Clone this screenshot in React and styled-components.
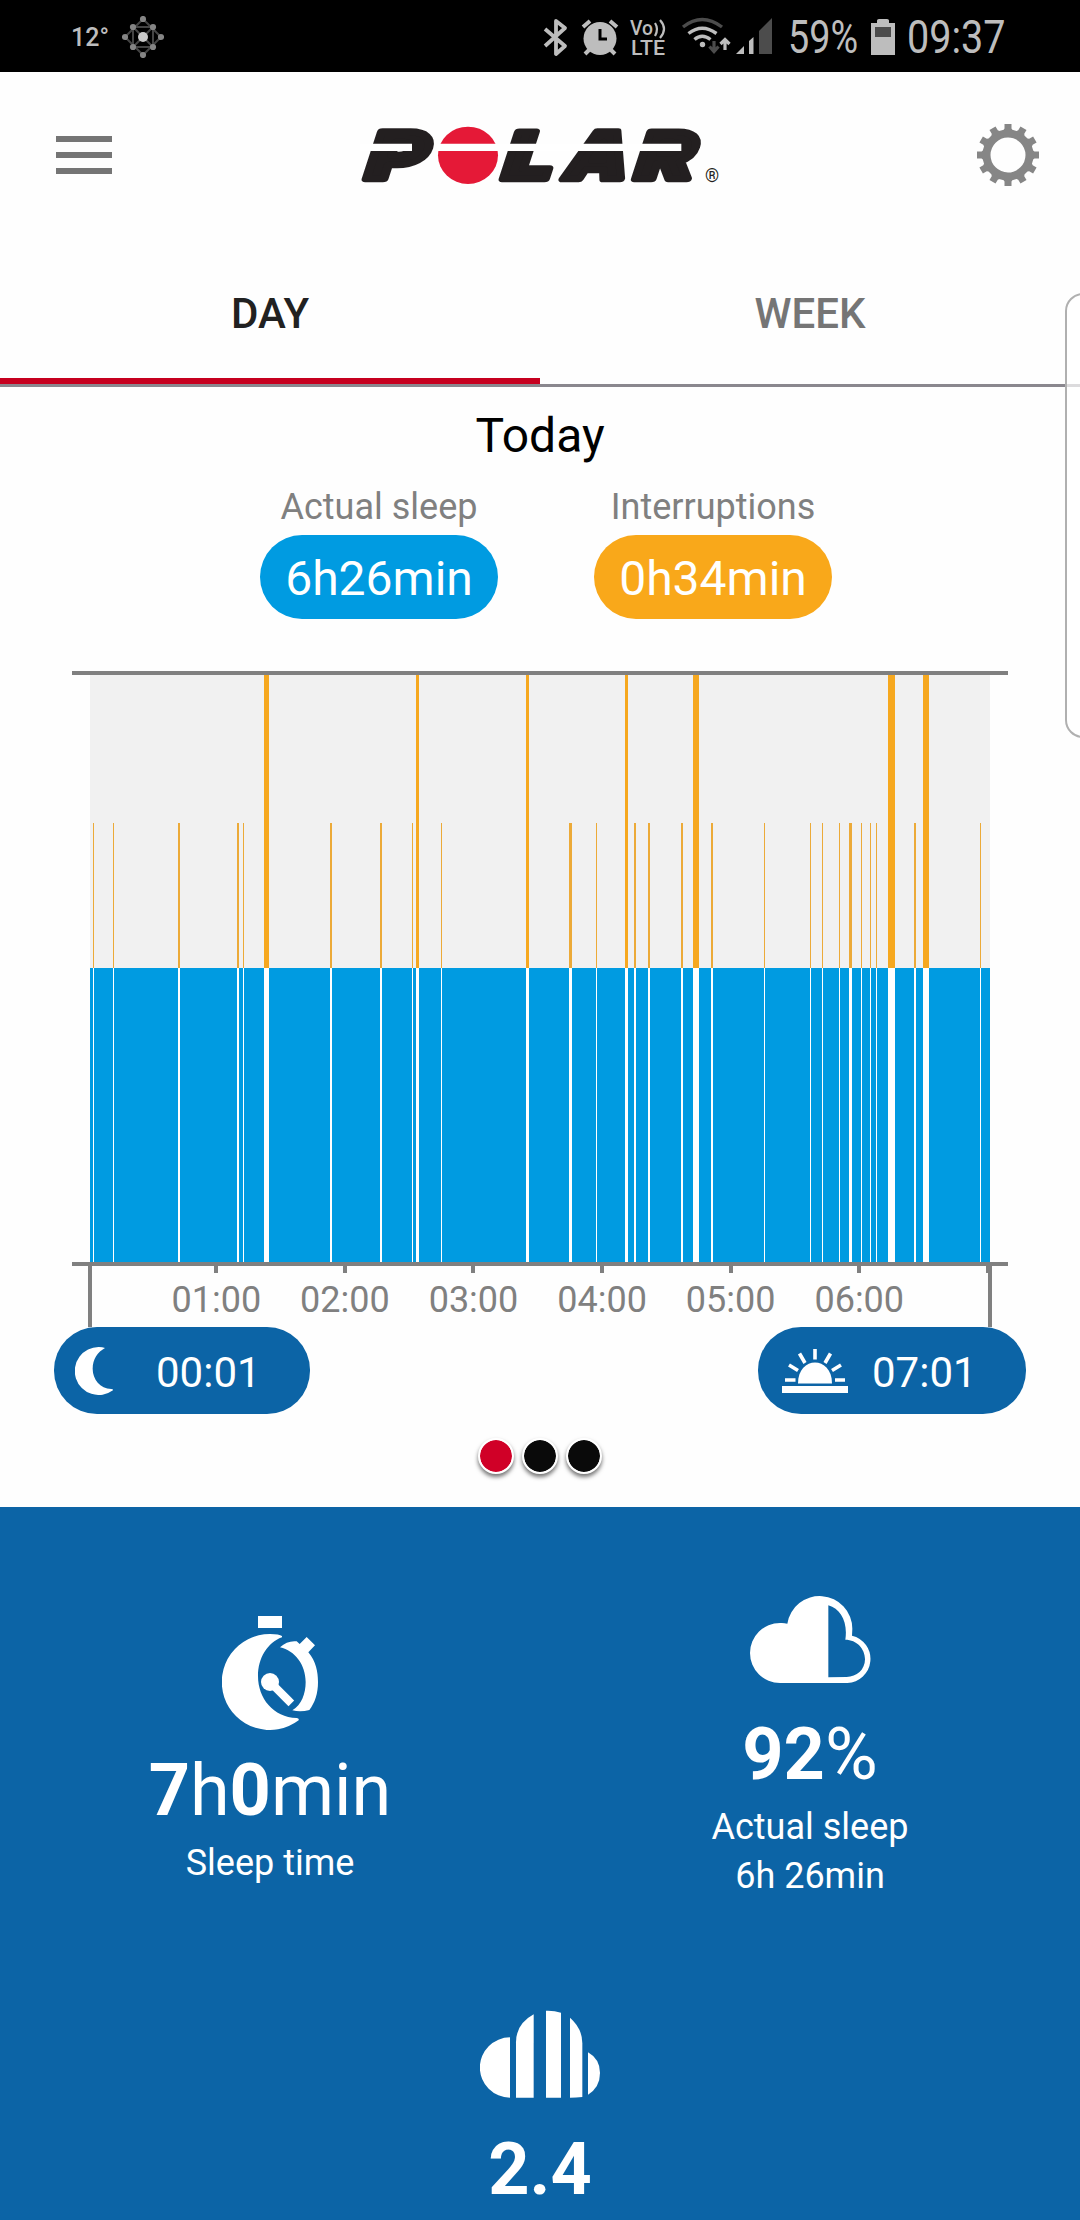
import React from 'react';
import styled, { createGlobalStyle } from 'styled-components';

const GlobalStyle = createGlobalStyle`
  * {
    box-sizing: border-box;
  }

  body {
    margin: 0;
    background: #fefefe;
  }

  svg {
    display: block;
    flex-shrink: 0;
  }
`;

const Page = styled.div`
  position: relative;
  display: flex;
  flex-direction: column;
  width: 1080px;
  height: 2220px;
  overflow: hidden;
  background: #fefefe;
  font-family: Roboto, sans-serif;
`;

const StatusBar = styled.div`
  display: flex;
  justify-content: space-between;
  height: 72px;
  padding: 0 74px 0 70px;
  background: #000;
  color: #bdbdbd;
`;

const StatusGroup = styled.div`
  display: flex;
  align-items: center;
  padding-top: 2px;
`;

const Temperature = styled.span`
  width: 52px;
  padding-left: 1px;
  font-size: 25px;
  font-weight: 500;
`;

const StatusText = styled.span`
  width: ${props => props.width};
  margin-left: ${props => props.gap};
  font-size: 46px;
  line-height: 50px;
  white-space: nowrap;

  span {
    display: inline-block;
    transform: scaleX(${props => props.squeeze});
    transform-origin: left;
  }
`;

const Header = styled.header`
  display: flex;
  align-items: center;
  justify-content: space-between;
  height: 166px;
  padding: 0 40px 0 56px;
`;

const MenuButton = styled.div`
  display: flex;
  flex-direction: column;
  gap: 10px;
  width: 56px;
`;

const MenuLine = styled.span`
  height: 6px;
  background: #757575;
`;

const LogoLink = styled.div`
  margin-right: 8px;
`;

const Tabs = styled.nav`
  display: flex;
  height: 149px;
  border-bottom: 3px solid #8a878e;
`;

const Tab = styled.div`
  display: flex;
  flex: 1;
  align-items: center;
  justify-content: center;
  padding-top: 10px;
  border-bottom: 6px solid ${props => (props.$active ? '#c6001f' : 'transparent')};
  color: ${props => (props.$active ? '#212121' : '#757575')};
  font-size: 42px;
  font-weight: 500;
`;

const DayTitle = styled.h1`
  margin: 21px 0 22px;
  color: #000;
  font-size: 48px;
  font-weight: 400;
  line-height: 56px;
  text-align: center;
`;

const Summary = styled.div`
  display: flex;
  gap: 96px;
  padding-left: 260px;
`;

const SummaryItem = styled.div`
  width: 238px;
`;

const SummaryLabel = styled.div`
  margin-bottom: 7px;
  color: #808080;
  font-size: 36px;
  line-height: 42px;
  text-align: center;
  white-space: nowrap;
`;

const SummaryValue = styled.div`
  height: 84px;
  padding-top: 2px;
  border-radius: 42px;
  background: ${props => props.color};
  color: #fff;
  font-size: 48px;
  line-height: 84px;
  text-align: center;
`;

const ChartWrap = styled.div`
  margin: 52px 72px 0;
`;

const Axis = styled.div`
  display: flex;
  height: 61px;
  margin: 0 88px;
  padding-left: 60px;
  border: solid #808080;
  border-width: 0 4px;
`;

const AxisCell = styled.div`
  display: flex;
  flex-direction: column;
  align-items: center;
  width: 128.6px;
  color: #808080;
  font-size: 36px;
  line-height: 42px;

  &::before {
    content: '';
    width: 4px;
    height: 7px;
    margin-bottom: 6px;
    background: #808080;
  }

  &:last-child {
    flex: 1;
    align-items: flex-end;
  }

  &:last-child::before {
    width: 2px;
  }
`;

const Times = styled.div`
  display: flex;
  justify-content: space-between;
  padding: 0 54px;
`;

const TimePill = styled.div`
  display: flex;
  align-items: center;
  gap: ${props => props.gap};
  width: ${props => props.width};
  height: 87px;
  padding-left: ${props => props.inset};
  border-radius: 43px;
  background: #0c64a6;
  color: #fff;
  font-size: 42px;

  span {
    padding-top: 3px;
  }
`;

const Dots = styled.div`
  display: flex;
  justify-content: center;
  gap: 8px;
  margin-top: 24px;
`;

const Dot = styled.span`
  width: 36px;
  height: 36px;
  border: 2px solid #fff;
  border-radius: 50%;
  background: ${props => (props.$active ? '#d00027' : '#0a0a0a')};
  background-clip: padding-box;
  box-shadow: 0 3px 4px rgba(0, 0, 0, 0.55);
`;

const Stats = styled.section`
  display: grid;
  grid-template-columns: 1fr 1fr;
  grid-template-rows: 414px auto;
  flex: 1;
  margin-top: 33px;
  padding-top: 89px;
  background: #0c64a6;
  color: #fff;
`;

const Stat = styled.div`
  display: flex;
  flex-direction: column;
  align-items: center;
  padding-top: ${props => props.offset || '0'};
  grid-column: ${props => (props.$wide ? '1 / -1' : 'auto')};
`;

const StatValue = styled.div`
  margin: ${props => props.gap} 0 6px;
  font-size: 72px;
  line-height: 84px;
  white-space: nowrap;
`;

const StatLabel = styled.div`
  font-size: 36px;
  line-height: 49px;
`;

const EdgePanel = styled.div`
  position: absolute;
  top: 293px;
  left: 1065px;
  width: 40px;
  height: 445px;
  border: 2px solid #b0b0b0;
  border-radius: 18px;
  background: rgba(255, 255, 255, 0.7);
`;

const CHART_LEFT = 72;

// [x, width] of each interruption
const longInterruptions = [
  [264, 5], [416, 3], [526, 3], [625, 3], [693, 6], [888, 7], [923, 6],
];

const shortInterruptions = [
  [93, 1], [113, 1], [178, 2], [237, 2], [243, 1], [330, 2], [380, 2],
  [412, 1], [441, 1], [569, 3], [596, 1], [634, 2], [648, 2], [681, 2],
  [711, 2], [764, 1], [810, 1], [822, 1], [839, 1], [849, 3], [861, 1],
  [870, 1], [876, 1], [914, 2], [980, 1],
];

const hours = ['01:00', '02:00', '03:00', '04:00', '05:00', '06:00', ''];

const SleepChart = () => (
  <svg width="936" height="595" viewBox="0 0 936 595" shapeRendering="crispEdges">
    <rect x="18" y="4" width="900" height="293" fill="#f1f1f1" />
    <rect x="18" y="297" width="900" height="294" fill="#009be1" />
    {longInterruptions.map(([x, width]) => (
      <rect key={x} x={x - CHART_LEFT} y="4" width={width} height="293" fill="#f6a81f" />
    ))}
    {shortInterruptions.map(([x, width]) => (
      <rect key={x} x={x - CHART_LEFT} y="152" width={width} height="145" fill="#ecaa38" />
    ))}
    {[...longInterruptions, ...shortInterruptions].map(([x, width]) => (
      <rect key={x} x={x - CHART_LEFT} y="297" width={width} height="294" fill="#fff" />
    ))}
    <rect width="936" height="4" fill="#808080" />
    <rect y="591" width="936" height="4" fill="#808080" />
  </svg>
);

const nodes = [
  [21, 3], [21, 39], [3, 21], [39, 21], [11, 11], [31, 11], [11, 31], [31, 31],
];

const NetworkIcon = () => (
  <svg width="42" height="42" viewBox="0 0 42 42">
    <path
      d="M21 3L39 21L21 39L3 21ZM11 11H31V31H11ZM11 11L31 31M31 11L11 31"
      fill="none"
      stroke="#444"
      strokeWidth="2"
    />
    {nodes.map(([x, y]) => (
      <circle key={`${x}-${y}`} cx={x} cy={y} r="3.1" fill="#858585" />
    ))}
    <circle cx="21" cy="21" r="5" fill="#c8c8c8" />
  </svg>
);

// bluetooth, alarm, VoLTE, wifi and signal strength
const StatusIcons = () => (
  <svg width="230" height="50" viewBox="544 12 230 50" fill="none" stroke="#bdbdbd">
    <path d="M546 29L566 46L557 54V21L566 28L546 46" strokeWidth="3.8" strokeLinejoin="round" />
    <g>
      <circle cx="601" cy="38.5" r="16.5" fill="#bdbdbd" stroke="none" />
      <path d="M584 27L591 21M618 27L611 21M590 50L586 54M612 50L616 54" strokeWidth="4" />
      <path d="M601 29V39H608" stroke="#000" strokeWidth="3" />
    </g>
    <g fill="#bdbdbd" stroke="none" fontFamily="Roboto, sans-serif" fontWeight="500">
      <text x="631" y="34.5" fontSize="19.5" textLength="23" lengthAdjust="spacingAndGlyphs">Vo</text>
      <text x="632" y="55" fontSize="21" textLength="34" lengthAdjust="spacingAndGlyphs">LTE</text>
    </g>
    <path d="M656 23Q660 29 656 36M661 20Q669 29 661 38" strokeWidth="2.2" />
    <path d="M684 27Q703 12 723 27" stroke="#4c4c4c" strokeWidth="3.4" />
    <path d="M689.5 33.5Q703 23 717.5 33.5M695.5 39.5Q703 33 711.5 39.5" strokeWidth="3.4" />
    <circle cx="703.5" cy="44.5" r="2.7" fill="#bdbdbd" stroke="none" />
    <path d="M715 41V51M710.5 46.5L715 51.5L719.5 46.5" stroke="#4c4c4c" strokeWidth="3.2" />
    <path d="M726 50V40M721.5 44L726 39.5L730.5 44" strokeWidth="3.2" />
    <path d="M737 54L745 46V54ZM750 41L754.5 37V54H750Z" fill="#bdbdbd" stroke="none" />
    <path d="M760 31L773 18V54H760Z" fill="#4c4c4c" stroke="none" />
  </svg>
);

const BatteryIcon = () => (
  <svg width="24" height="36" viewBox="0 0 24 36">
    <path d="M0 4H6V1.5Q6 0 8 0H16Q18 0 18 1.5V4H24V36H0Z" fill="#bdbdbd" />
    <rect x="4" y="8" width="16" height="10" fill="#4c4c4c" />
  </svg>
);

const logoLetters = [
  { letter: 'P', x: 66, scale: 1.38 },
  { letter: 'L', x: 477, scale: 1.33 },
  { letter: 'A', x: 662, scale: 1.2 },
  { letter: 'R', x: 874, scale: 1.32 },
];

const PolarLogo = () => (
  <svg width="400" height="110" viewBox="0 0 1200 330">
    <g
      fill="#231f20"
      stroke="#231f20"
      strokeWidth="20"
      strokeLinejoin="round"
      fontFamily="Inter, sans-serif"
      fontWeight="900"
      fontSize="195"
    >
      {logoLetters.map(({ letter, x, scale }) => (
        <text key={letter} transform={`translate(${x} 237) skewX(-18) scale(${scale} 1)`}>
          {letter}
        </text>
      ))}
    </g>
    <ellipse cx="384" cy="166" rx="90" ry="86" fill="#e51937" />
    <path d="M60 142H216M290 142H860M865 142H1024" stroke="#fff" strokeWidth="22" />
    <text x="1095" y="246" fill="#231f20" fontFamily="Roboto, sans-serif" fontSize="54">®</text>
  </svg>
);

const teeth = Array.from({ length: 12 }, (_, i) => i * 30);

const GearIcon = () => (
  <svg width="64" height="64" viewBox="-32 -32 64 64">
    <circle r="21.5" fill="none" stroke="#868686" strokeWidth="8" />
    {teeth.map(angle => (
      <path key={angle} d="M-6 -23L-3.5 -26.5V-31H3.5V-26.5L6 -23Z" fill="#868686" transform={`rotate(${angle})`} />
    ))}
  </svg>
);

const MoonIcon = () => (
  <svg width="39" height="48" viewBox="135 318 117 144" fill="#fff">
    <path d="M225 321Q217 318 207 318A72 72 0 1 0 249 448Q250 444 244 444C210 442 188 415 188 383C188 355 203 333 225 321Z" />
  </svg>
);

const SunriseIcon = () => (
  <svg width="66" height="44" viewBox="0 0 66 44" fill="#fff">
    <path d="M16 34.5C16 6.5 50 6.5 50 34.5Z" />
    <rect y="37" width="66" height="7" />
    <path
      d="M33 0V10.5M17.5 4.5L23 14M48.5 4.5L43 14M7 16L16 21.5M59 16L50 21.5M3 31H13.5M53 31H63"
      stroke="#fff"
      strokeWidth="3.6"
    />
  </svg>
);

const SleepTimeIcon = () => (
  <svg width="96" height="114" viewBox="276 78 288 342" fill="#fff">
    <rect x="384" y="78" width="72" height="36" />
    <path d="M456 138Q448 132 420 132A144 144 0 1 0 506 391Q508 385 500 384C430 382 384 325 384 258C384 205 412 158 456 142Z" />
    <path d="M450 172Q472 151 500 154L509 162L530 141L555 166L535 187C558 215 564 245 564 276C564 310 555 338 538 360Q512 367 487 361C515 345 527 310 527 276C527 225 495 182 450 172Z" />
    <circle cx="420" cy="276" r="27" />
    <path d="M425 281L484 340" stroke="#fff" strokeWidth="24" />
  </svg>
);

const HalfCloudIcon = () => (
  <svg width="121" height="87" viewBox="180 77 363 261" fill="#fff">
    <path
      fillRule="evenodd"
      d="M270 338A90 90 0 0 1 270 158Q281 157 292 160A98.1 98.1 0 0 1 487 175L486 196A72 72 0 0 1 472 338ZM415 105C452 115 474 155 466 208C500 208 525 235 525 267C525 298 500 320 470 320L415 321Z"
    />
  </svg>
);

const StripedCloudIcon = () => (
  <svg width="120" height="88" viewBox="120 88 360 264" fill="#fff">
    <path d="M210 170A90 90 0 0 0 210 351Z" />
    <path d="M281 101Q228 130 228 185V351H281Z" />
    <path d="M318 90Q342 89 363 96V351H318Z" />
    <path d="M390 111Q427 143 427 188V349Q408 351 390 351Z" />
    <path d="M444 215Q480 235 480 277Q480 320 444 342Z" />
  </svg>
);

const App = () => {
  return (
    <Page>
      <GlobalStyle />
      <StatusBar>
        <StatusGroup>
          <Temperature>12°</Temperature>
          <NetworkIcon />
        </StatusGroup>
        <StatusGroup>
          <StatusIcons />
          <StatusText gap="15px" width="83px" squeeze="0.82"><span>59%</span></StatusText>
          <BatteryIcon />
          <StatusText gap="12px" width="99px" squeeze="0.86"><span>09:37</span></StatusText>
        </StatusGroup>
      </StatusBar>

      <Header>
        <MenuButton>
          <MenuLine />
          <MenuLine />
          <MenuLine />
        </MenuButton>
        <LogoLink>
          <PolarLogo />
        </LogoLink>
        <GearIcon />
      </Header>

      <Tabs>
        <Tab $active>DAY</Tab>
        <Tab>WEEK</Tab>
      </Tabs>

      <DayTitle>Today</DayTitle>

      <Summary>
        <SummaryItem>
          <SummaryLabel>Actual sleep</SummaryLabel>
          <SummaryValue color="#009be1">6h26min</SummaryValue>
        </SummaryItem>
        <SummaryItem>
          <SummaryLabel>Interruptions</SummaryLabel>
          <SummaryValue color="#f9a81a">0h34min</SummaryValue>
        </SummaryItem>
      </Summary>

      <ChartWrap>
        <SleepChart />
      </ChartWrap>
      <Axis>
        {hours.map(hour => (
          <AxisCell key={hour}>{hour}</AxisCell>
        ))}
      </Axis>

      <Times>
        <TimePill width="256px" inset="21px" gap="42px">
          <MoonIcon />
          <span>00:01</span>
        </TimePill>
        <TimePill width="268px" inset="24px" gap="24px">
          <SunriseIcon />
          <span>07:01</span>
        </TimePill>
      </Times>

      <Dots>
        <Dot $active />
        <Dot />
        <Dot />
      </Dots>

      <Stats>
        <Stat offset="20px">
          <SleepTimeIcon />
          <StatValue gap="19px"><b>7</b>h<b>0</b>min</StatValue>
          <StatLabel>Sleep time</StatLabel>
        </Stat>
        <Stat>
          <HalfCloudIcon />
          <StatValue gap="30px"><b>92</b>%</StatValue>
          <StatLabel>Actual sleep</StatLabel>
          <StatLabel>6h 26min</StatLabel>
        </Stat>
        <Stat $wide>
          <StripedCloudIcon />
          <StatValue gap="30px"><b>2.4</b></StatValue>
        </Stat>
      </Stats>

      <EdgePanel />
    </Page>
  );
};

export default App;
